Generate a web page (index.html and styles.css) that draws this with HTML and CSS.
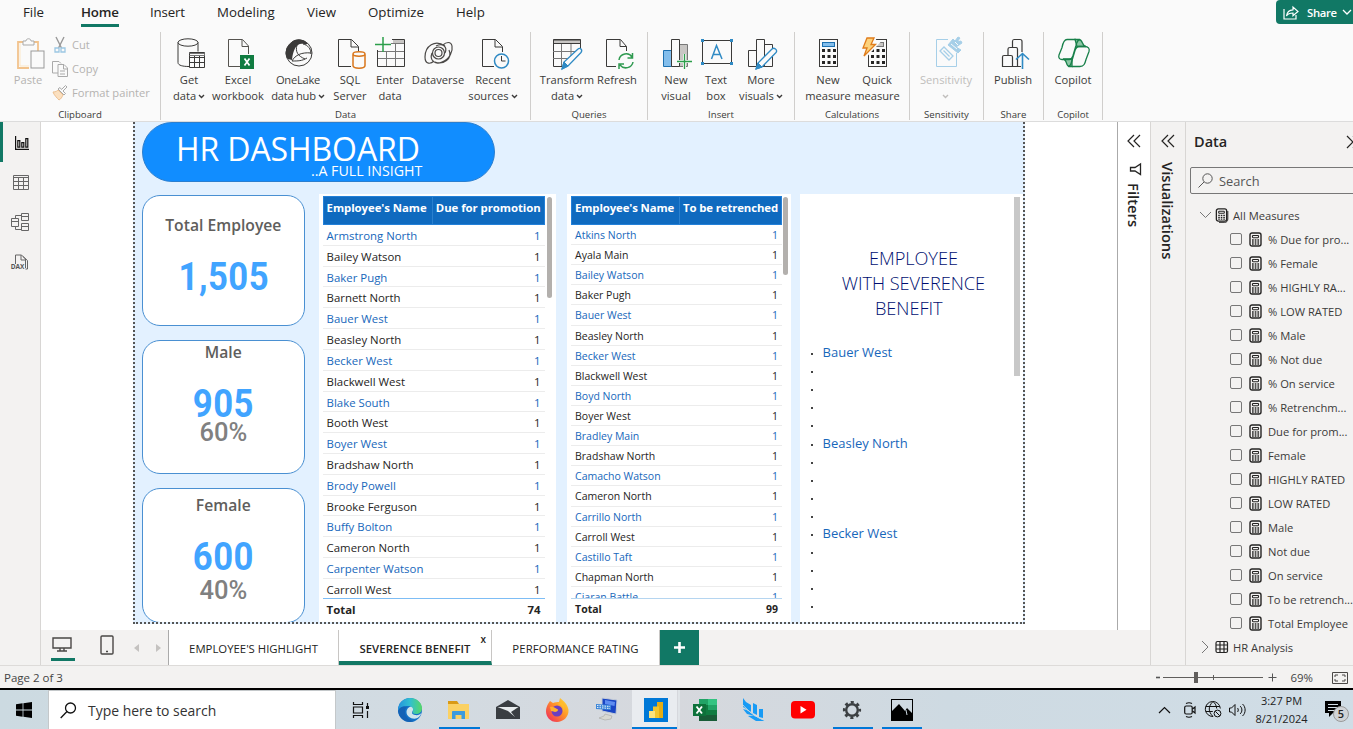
FILE: index.html
```html
<!DOCTYPE html>
<html lang="en">
<head>
<meta charset="utf-8">
<title>HR Dashboard</title>
<link rel="stylesheet" href="styles.css">
</head>
<body>
<svg class="defs" aria-hidden="true">
  <symbol id="calc" viewBox="0 0 13 15"><rect x="1" y="1" width="11" height="13" rx="2" fill="none" stroke="#252423" stroke-width="1.400"/><rect x="3.500" y="3.500" width="6" height="2.200" rx=".6" fill="none" stroke="#252423" stroke-width="1.100"/><path d="M3 8h1.700M5.700 8h1.700M8.400 8h1.700M3 10h1.700M5.700 10h1.700M8.400 10h1.700M3 12h1.700M5.700 12h1.700M8.400 12h1.700" stroke="#252423" stroke-width="1.300"/></symbol>
  <symbol id="chev" viewBox="0 0 7 5"><path d="M1 1l2.500 2.500L6 1" fill="none" stroke="currentColor" stroke-width="1.4"/></symbol>
  <symbol id="dbl" viewBox="0 0 14 14"><path d="M7 1L1 7l6 6M13 1L7 7l6 6" fill="none" stroke="#252423" stroke-width="1.2"/></symbol>
</svg>

<nav class="menu">
  <span class="m-file">File</span><span class="m-home">Home</span><span class="m-insert">Insert</span><span class="m-model">Modeling</span><span class="m-view">View</span><span class="m-opt">Optimize</span><span>Help</span>
  <button class="share"><svg width="16" height="15" viewBox="0 0 16 15" fill="none" stroke="#fff" stroke-width="1.2"><path d="M1 4v10h12v-4M3.500 11C4 7 6 5 10 4.800V2l5 4.500-5 4.300V8C7 8 5 8.500 3.500 11z"/></svg>Share<svg class="share-chev" width="10" height="7" viewBox="0 0 10 7"><path d="M1 1l4 4 4-4" fill="none" stroke="#fff" stroke-width="1.3"/></svg></button>
</nav>

<section class="ribbon">
  <div class="group g-clip">
    <div class="items">
      <div class="item paste"><svg viewBox="0 0 32 32"><path d="M10 5H5v26h11M21 5h4v9" fill="none" stroke="#f2c38d" stroke-width="1.800"/><path d="M7 6v23h9" fill="none" stroke="#fbe7c8"/><path d="M10 8V4h3c0-3 5-3 5 0h3v4z" fill="#fafafa" stroke="#aaa"/><rect x="18" y="14" width="13" height="17" fill="#fafafa" stroke="#999"/></svg><span>Paste</span></div>
      <div class="clip-list">
        <div><svg viewBox="0 0 16 16"><path d="M4 0l5.500 11M12 0L6.500 11" stroke="#999" fill="none" stroke-width="1.400"/><path d="M3 11h4v4H3zM9 11h4v4H9z" fill="none" stroke="#9cc7e3" stroke-width="1.300"/></svg>Cut</div>
        <div><svg viewBox="0 0 16 16"><path d="M6 12H.5V.5H7l2 2M6 3.500h6l3.500 3.500v8.500H6zM11.500 4v4h4M8 10h5M8 13h5" fill="none" stroke="#aaa"/></svg>Copy</div>
        <div><svg viewBox="0 0 16 16"><path d="M1 7c3 0 4-1 5-2l5 5c-1 2-2 4-4 5-2-2-5-5-6-8z" fill="#fbe0c0" stroke="#edc091"/><path d="M6 4l6 6 1.500-1.500L11 6l4-4-1.500-1.500-4 4L8 2.500z" fill="#fafafa" stroke="#aaa"/></svg>Format painter</div>
      </div>
    </div>
    <div class="glabel">Clipboard</div>
  </div>
  <div class="group g-data">
    <div class="items">
      <div class="item w40"><svg viewBox="0 0 32 32" fill="none" stroke="#3b3a39"><ellipse cx="14" cy="5.500" rx="10" ry="3.700"/><path d="M4 5.500v20c0 3 5 4 11 4M24 5.500v9"/><path d="M15.500 15.500h15v15h-15zM15.500 20.500h15M15.500 25.500h15M20.500 19v12M25.500 19v12"/><path d="M15.500 16.500h15v2h-15" stroke="#777"/></svg><span>Get<br>data<svg class="cv"><use href="#chev"/></svg></span></div>
      <div class="item w58"><svg viewBox="0 0 32 32" fill="none" stroke="#55534f"><path d="M17 29.500H5.500v-27h14l6 6.500v8M19 3v6.500h6"/><rect x="17" y="18" width="14" height="14" fill="#107c41" stroke="none"/><path d="M21.500 21.500l5 7M26.500 21.500l-5 7" stroke="#fff" stroke-width="1.700"/></svg><span>Excel<br>workbook</span></div>
      <div class="item w62"><svg viewBox="0 0 32 32"><circle cx="16" cy="16" r="13" fill="#fafafa" stroke="#3b3a39"/><path d="M8 6c3-5 12-5 16 0 1 1-1 2-3 1-7-2-11 5-12 16l-4-1C1 19 2 10 8 6z" fill="#3b3a39"/><path d="M14 8c-2 7 1 11 8 14M9 24c3-6 10-9 19-8M20 7c5 1 8 5 8 10M9 24c6 0 10 0 15-3" fill="none" stroke="#3b3a39"/></svg><span class="tight">OneLake<br>data hub<svg class="cv"><use href="#chev"/></svg></span></div>
      <div class="item w42"><svg viewBox="0 0 32 32" fill="none" stroke="#3b3a39"><path d="M16 29.500H3.500v-27h13l7 7V14M16 3v7h7"/><path d="M18 17.500v11c0 3.500 12 3.500 12 0v-11" stroke="#d9761b" stroke-width="1.500"/><ellipse cx="24" cy="17" rx="6" ry="2.200" stroke="#d9761b" stroke-width="1.500"/></svg><span>SQL<br>Server</span></div>
      <div class="item w38"><svg viewBox="0 0 32 32" fill="none" stroke="#3b3a39"><path d="M18 3h11v3H18z" fill="#c8c6c4" stroke="none"/><path d="M17 2.500h12.500v27h-27V13"/><path d="M16 6.500h13M3 14.500h26M3 21.500h26M11.500 15v14M20.500 7v22" stroke="#777"/><path d="M0 7.500h16M8 0v15" stroke="#2b9e4a" stroke-width="1.500"/></svg><span>Enter<br>data</span></div>
      <div class="item w58"><svg viewBox="0 0 32 32" fill="none" stroke="#4a4846" stroke-width="1.200"><circle cx="15.500" cy="16" r="6"/><circle cx="15.500" cy="16" r="3.500"/><path d="M22 9C12 2 2 9 2 20c0 8 6 7 9 4M9 16c-3 8 4 12 10 9 8-3 11-11 10-16-1-5-6-4-9-1M12 25c8 3 18-3 14-12M22 16c3-7-3-10-9-7"/></svg><span>Dataverse</span></div>
      <div class="item w52"><svg viewBox="0 0 32 32" fill="none" stroke="#3b3a39"><path d="M16 29.500H4.500v-27h13l7 7V15M17 3v7h7"/><circle cx="23.500" cy="24" r="7" stroke="#2f8ac4" stroke-width="1.500"/><path d="M23.500 19v5h4"/></svg><span>Recent<br>sources<svg class="cv"><use href="#chev"/></svg></span></div>
    </div>
    <div class="glabel">Data</div>
  </div>
  <div class="group g-query">
    <div class="items">
      <div class="item w54"><svg viewBox="0 0 32 32" fill="none" stroke="#3b3a39"><path d="M1.500 3h27v3.500h-27z" fill="#c8c6c4"/><path d="M12 29.500H1.500v-27h27V12"/><path d="M1 14.500h23M1 21.500h16M9.500 7v22M19 7v13" stroke="#777"/><path d="M10 32l2-7 14-13c2-2 5 1 3 3.500L16 29z" fill="#fafafa" stroke="#2f8ac4" stroke-width="1.300"/><path d="M10 32l2-7 4 4z" fill="#2f8ac4" stroke="#2f8ac4"/></svg><span>Transform<br>data<svg class="cv"><use href="#chev"/></svg></span></div>
      <div class="item w46"><svg viewBox="0 0 32 32" fill="none" stroke="#3b3a39"><path d="M14 29.500H4.500v-27h14l6 7V14M18 3v6.500h6.500"/><path d="M17 23c1-7 10-8 13-3M30.500 16v5h-5M31 25c-1 6-9 8-13 3M17 32v-5h5" stroke="#2f9a50" stroke-width="1.500"/></svg><span>Refresh</span></div>
    </div>
    <div class="glabel">Queries</div>
  </div>
  <div class="group g-insert">
    <div class="items">
      <div class="item w40"><svg viewBox="0 0 32 32" fill="none" stroke="#3b3a39"><path d="M2.500 13.500h8v16h-8z" fill="#83beec" stroke="#1d70b0"/><path d="M18 7.500h8.500v22H18z" fill="#c8c6c4" stroke="#777"/><path d="M10.500 2.500h8v27h-8z" fill="#fafafa"/><path d="M16 24.500h15M23.500 17v15" stroke="#fafafa" stroke-width="3"/><path d="M16 24.500h15M23.500 17v15" stroke="#2b9e4a" stroke-width="1.300"/></svg><span>New<br>visual</span></div>
      <div class="item w40"><svg viewBox="0 0 32 32" fill="none" stroke="#3b3a39"><path d="M1.500 3.500h29v23h-29z"/><path d="M10.500 22l5-13.500L21 22M12.300 17.500h7" stroke="#2f8ac4" stroke-width="1.500"/><path d="M0 2h3v3H0zM29 2h3v3h-3zM0 25h3v3H0zM29 25h3v3h-3z" fill="#2f8ac4" stroke="none"/></svg><span>Text<br>box</span></div>
      <div class="item w50"><svg viewBox="0 0 32 32" fill="none" stroke="#3b3a39"><path d="M2.500 13.500h8v16h-8zM18.500 7.500h8v22h-8zM10.500 2.500h8v27h-8z"/><path d="M10 32l2-6 14-14c2-2 6 1 4 3.500L16 30z" fill="#fafafa" stroke="#2f8ac4" stroke-width="1.300"/><path d="M10 32l2-6 4 4z" fill="#2f8ac4" stroke="#2f8ac4"/></svg><span>More<br>visuals<svg class="cv"><use href="#chev"/></svg></span></div>
    </div>
    <div class="glabel">Insert</div>
  </div>
  <div class="group g-calc">
    <div class="items">
      <div class="item w48"><svg viewBox="0 0 32 32"><rect x="6.500" y="2.500" width="18" height="27" fill="none" stroke="#3b3a39"/><rect x="9.500" y="5.500" width="12" height="4" fill="#83beec" stroke="#1d70b0"/><path d="M9 13.500h14M9 19.500h14M9 25.500h14" stroke="#252423" stroke-width="3" stroke-dasharray="3 2.500"/></svg><span>New<br>measure</span></div>
      <div class="item w50"><svg viewBox="0 0 32 32"><rect x="6.500" y="2.500" width="18" height="27" fill="none" stroke="#3b3a39"/><rect x="9.500" y="5.500" width="12" height="4" fill="#c8c6c4" stroke="#777"/><path d="M9 13.500h14M9 19.500h14M9 25.500h14" stroke="#252423" stroke-width="3" stroke-dasharray="3 2.500"/><path d="M5 0h8l-3 7h4L2 20l3-9H1z" fill="#fcd98c" stroke="#fafafa" stroke-width="4"/><path d="M5 1h7L9 7.500h4.500L2 19l3-8H1z" fill="#fcd27c" stroke="#e07c1b" stroke-width="1.300"/></svg><span>Quick<br>measure</span></div>
    </div>
    <div class="glabel">Calculations</div>
  </div>
  <div class="group g-sens">
    <div class="items">
      <div class="item w62 off"><svg viewBox="0 0 32 32" fill="none" stroke="#a6cfe8"><path d="M17 2.500H5.500v27h20V16"/><path d="M9 14l4-4 9 9-4 4zM12.500 13.500l6 6" stroke-width="1.300"/><path d="M17 8l5-6 2 2 3-4 2 1-3 4 4-1 1 2-6 4 5 3-3 3z" fill="#a6cfe8"/><path d="M20 7l6 5M24 5l3 3" stroke="#fafafa"/></svg><span>Sensitivity<br><svg class="cv solo"><use href="#chev"/></svg></span></div>
    </div>
    <div class="glabel">Sensitivity</div>
  </div>
  <div class="group g-share">
    <div class="items">
      <div class="item w50"><svg viewBox="0 0 32 32" fill="none" stroke="#3b3a39" stroke-width="1.200"><path d="M24 15V4.500c0-1-.5-2-2-2h-6c-1 0-1.500 1-1.500 2V10M19.500 18v-6c0-1-.5-1.500-1.500-1.500h-6c-1.500 0-2 .5-2 1.500v6M4.500 29.500V20c0-1.500.5-1.500 1.500-1.500h7c1.500 0 1.500.5 1.500 1.500v9.500zM14.500 29.500H23M19.500 18v11"/><path d="M24.500 32V16.500M18 22.500l6.500-6 6.500 6" stroke="#2f8ac4" stroke-width="1.600"/></svg><span>Publish</span></div>
    </div>
    <div class="glabel">Share</div>
  </div>
  <div class="group g-cop">
    <div class="items">
      <div class="item w50"><svg viewBox="0 0 32 32" stroke="#18804a" stroke-width="1.300" fill="none"><path d="M17 2.500h4c4 0 3 7 7 7h-9zM14 29.500h-3C8 29.500 9 22 5 22h9z" fill="#8cc7a6"/><path d="M18 2.500H9c-3 0-4 3-5 8L1 18c-1 3 1 4.500 3 4.500h7c2 0 3-1 4-4l3-10c1-4 2-6 4-6M14 29.500h8c4 0 5-3 6-7l3-8c1-3-1-5-4-5h-6c-2 0-3 1-4 4l-3 10c-1 4-2 6-4 6"/></svg><span>Copilot</span></div>
    </div>
    <div class="glabel">Copilot</div>
  </div>
</section>

<main class="work">
  <aside class="rail">
    <div class="rail-item on"><svg width="14" height="14" viewBox="0 0 14 14" fill="none" stroke="#111" stroke-width="1.200"><path d="M.6 0v13.400H14M2.800 4.600h2v6.600h-2zM6.800 6.600h2v4.600h-2zM10.800 2.600h2v8.600h-2z"/></svg></div>
    <div class="rail-item"><svg width="16" height="15" viewBox="0 0 16 15" fill="none" stroke="#666"><path d="M.5.5h15v14H.5zM.5 2.500h15M.5 6.500h15M.5 10.500h15M5.500 3v11M10.500 3v11"/></svg></div>
    <div class="rail-item"><svg width="19" height="19" viewBox="0 0 19 19" fill="none" stroke="#666"><path d="M.5 5.500h7v8h-7zM.5 8.500h7M10.500.5h7v7h-7zM10.500 3.500h7M10.500 10.500h7v7h-7zM10.500 13.500h7M4.500 5V2.500h6M4.500 14v2.500h6"/></svg></div>
    <div class="rail-item dax"><svg width="17" height="17" viewBox="0 0 17 17" fill="none" stroke="#666"><path d="M4.500 10V1h6l4 4v9M10 1v5h4M12 2.500l4.500 4V15h-2"/></svg><span>DAX</span></div>
  </aside>

  <div class="center">
    <div class="canvas">
      <div class="report">
        <header class="banner"><h1>HR DASHBOARD</h1><p>..A FULL INSIGHT</p></header>
        <div class="visuals">
          <div class="cards">
            <div class="card total"><h2>Total Employee</h2><b>1,505</b></div>
            <div class="card male"><h2>Male</h2><b>905</b><i>60%</i></div>
            <div class="card female"><h2>Female</h2><b>600</b><i>40%</i></div>
          </div>
          <div class="table t1">
            <div class="head"><span>Employee's Name</span><span>Due for promotion</span></div>
            <ul>
              <li>Armstrong North<em>1</em></li><li>Bailey Watson<em>1</em></li><li>Baker Pugh<em>1</em></li><li>Barnett North<em>1</em></li><li>Bauer West<em>1</em></li><li>Beasley North<em>1</em></li><li>Becker West<em>1</em></li><li>Blackwell West<em>1</em></li><li>Blake South<em>1</em></li><li>Booth West<em>1</em></li><li>Boyer West<em>1</em></li><li>Bradshaw North<em>1</em></li><li>Brody Powell<em>1</em></li><li>Brooke Ferguson<em>1</em></li><li>Buffy Bolton<em>1</em></li><li>Cameron North<em>1</em></li><li>Carpenter Watson<em>1</em></li><li>Carroll West<em>1</em></li>
            </ul>
            <div class="sum">Total<em>74</em></div>
            <div class="bar"></div>
          </div>
          <div class="table t2">
            <div class="head"><span>Employee's Name</span><span>To be retrenched</span></div>
            <ul>
              <li>Atkins North<em>1</em></li><li>Ayala Main<em>1</em></li><li>Bailey Watson<em>1</em></li><li>Baker Pugh<em>1</em></li><li>Bauer West<em>1</em></li><li>Beasley North<em>1</em></li><li>Becker West<em>1</em></li><li>Blackwell West<em>1</em></li><li>Boyd North<em>1</em></li><li>Boyer West<em>1</em></li><li>Bradley Main<em>1</em></li><li>Bradshaw North<em>1</em></li><li>Camacho Watson<em>1</em></li><li>Cameron North<em>1</em></li><li>Carrillo North<em>1</em></li><li>Carroll West<em>1</em></li><li>Castillo Taft<em>1</em></li><li>Chapman North<em>1</em></li><li>Ciaran Battle<em>1</em></li>
            </ul>
            <div class="sum">Total<em>99</em></div>
            <div class="bar"></div>
          </div>
          <div class="severance">
            <h2>&nbsp;&nbsp;EMPLOYEE<br>&nbsp;&nbsp;WITH SEVERENCE<br>BENEFIT</h2>
            <ul><li>Bauer West</li><li></li><li></li><li></li><li></li><li>Beasley North</li><li></li><li></li><li></li><li></li><li>Becker West</li><li></li><li></li><li></li><li></li></ul>
            <div class="bar"></div>
          </div>
        </div>
      </div>
      <aside class="filters"><svg width="14" height="14"><use href="#dbl"/></svg><svg class="funnel" width="13" height="13" viewBox="0 0 13 13"><path d="M11.500 1v10.500L6 8H1.500V4.500H6z" fill="none" stroke="#252423" stroke-width="1.300"/></svg><span>Filters</span></aside>
    </div>
    <div class="tabs">
      <div class="views">
        <span class="desk"><svg width="20" height="15" viewBox="0 0 20 15" fill="none" stroke="#4a4846" stroke-width="1.400"><path d="M1 1h18v10H1zM8 11v3M12 11v3M5 14h10"/></svg></span>
        <svg class="phone" width="14" height="20" viewBox="0 0 14 20" fill="none" stroke="#4a4846" stroke-width="1.400"><rect x="1" y="1" width="12" height="18" rx="1"/><path d="M6 16.500h2"/></svg>
        <svg class="arrows" width="28" height="8" viewBox="0 0 28 8" fill="#c4c2c0"><path d="M5 0v8L0 4zM22 0v8l5-4z"/></svg>
      </div>
      <div class="tab t-high">EMPLOYEE'S HIGHLIGHT</div>
      <div class="tab t-sev">SEVERENCE BENEFIT<span class="x">x</span></div>
      <div class="tab t-perf">PERFORMANCE RATING</div>
      <div class="plus"><svg width="11" height="11" viewBox="0 0 11 11"><path d="M5.500 0v11M0 5.500h11" stroke="#fff" stroke-width="2.600"/></svg></div>
    </div>
  </div>

  <aside class="vis"><svg width="14" height="14"><use href="#dbl"/></svg><span>Visualizations</span></aside>

  <aside class="data">
    <div class="data-head">Data<svg width="14" height="14" viewBox="0 0 14 14"><path d="M1 1l6 6-6 6M7 1l6 6-6 6" fill="none" stroke="#252423" stroke-width="1.200"/></svg></div>
    <div class="find"><svg width="15" height="15" viewBox="0 0 15 15" fill="none" stroke="#555"><circle cx="9.500" cy="5.500" r="4.700"/><path d="M6 9l-5.500 5.500"/></svg>Search</div>
    <div class="node"><svg width="13" height="8" viewBox="0 0 13 8"><path d="M1 1l5.500 5.500L12 1" fill="none" stroke="#777"/></svg><svg class="ico" width="14" height="15" viewBox="0 0 14 15"><use href="#calc" width="13" height="14"/><path d="M12.800 3v8c0 2-1 3.300-3 3.300H4" fill="none" stroke="#252423"/></svg>All Measures</div>
    <div class="leaf"><i></i><svg><use href="#calc"/></svg>% Due for pro...</div>
    <div class="leaf"><i></i><svg><use href="#calc"/></svg>% Female</div>
    <div class="leaf"><i></i><svg><use href="#calc"/></svg>% HIGHLY RA...</div>
    <div class="leaf"><i></i><svg><use href="#calc"/></svg>% LOW RATED</div>
    <div class="leaf"><i></i><svg><use href="#calc"/></svg>% Male</div>
    <div class="leaf"><i></i><svg><use href="#calc"/></svg>% Not due</div>
    <div class="leaf"><i></i><svg><use href="#calc"/></svg>% On service</div>
    <div class="leaf"><i></i><svg><use href="#calc"/></svg>% Retrenchm...</div>
    <div class="leaf"><i></i><svg><use href="#calc"/></svg>Due for prom...</div>
    <div class="leaf"><i></i><svg><use href="#calc"/></svg>Female</div>
    <div class="leaf"><i></i><svg><use href="#calc"/></svg>HIGHLY RATED</div>
    <div class="leaf"><i></i><svg><use href="#calc"/></svg>LOW RATED</div>
    <div class="leaf"><i></i><svg><use href="#calc"/></svg>Male</div>
    <div class="leaf"><i></i><svg><use href="#calc"/></svg>Not due</div>
    <div class="leaf"><i></i><svg><use href="#calc"/></svg>On service</div>
    <div class="leaf"><i></i><svg><use href="#calc"/></svg>To be retrench...</div>
    <div class="leaf"><i></i><svg><use href="#calc"/></svg>Total Employee</div>
    <div class="node"><svg width="13" height="12" viewBox="0 0 13 12"><path d="M3 0l6 6-6 6" fill="none" stroke="#777"/></svg><svg class="ico" width="14" height="14" viewBox="0 0 14 14" fill="none" stroke="#252423" stroke-width="1.200"><rect x="1" y="1.500" width="11.500" height="11" rx="1.500"/><path d="M1 5h12M1 9h12M5 1.500v11M9 1.500v11"/></svg>HR Analysis</div>
  </aside>
</main>

<footer class="status"><span class="page">Page 2 of 3</span>
  <div class="zoom"><svg width="124" height="13" viewBox="0 0 124 13"><path d="M1 6.500h4" stroke="#555" stroke-width="1.600"/><path d="M8 6.500h100" stroke="#605e5c"/><path d="M58.500 4v5" stroke="#605e5c"/><path d="M39 1h4v11h-4z" fill="#605e5c"/><path d="M113.500 6.500h8M117.500 2.500v8" stroke="#555"/></svg><span>69%</span><svg width="16" height="12" viewBox="0 0 16 12" fill="none" stroke="#4a4846"><path d="M.5.5h15v11H.5z"/><path d="M3 5V3h3M10 3h3v2M13 7v2h-3M6 9H3V7"/></svg></div>
</footer>

<div class="taskbar">
  <div class="start"><svg width="16" height="16" viewBox="0 0 16 16"><path d="M0 2.300L6.600 1.300v6.300H0zM7.400 1.200L16 0v7.600H7.400zM0 8.400h6.600v6.300L0 13.700zM7.400 8.400H16V16l-8.600-1.200z"/></svg></div>
  <div class="search"><svg width="17" height="17" viewBox="0 0 17 17" fill="none" stroke="#111" stroke-width="1.300"><circle cx="10.500" cy="6" r="5"/><path d="M7 9.500L.7 16"/></svg>Type here to search</div>
  <div class="apps">
    <span><svg width="18" height="16" viewBox="0 0 18 16" fill="none" stroke="#111" stroke-width="1.200"><path d="M1.500 0v2.500h9V0M1.500 5h9v6h-9zM1.500 16v-2.500h9V16M15.500 1v3M15.500 9v7"/><path d="M14 4h3v3h-3z" fill="#111" stroke="none"/></svg></span>
    <span><svg width="24" height="24" viewBox="0 0 24 24"><defs><linearGradient id="eg" x1="0" y1="0" x2="1" y2="0"><stop offset="0" stop-color="#2493dd"/><stop offset=".5" stop-color="#31bfd0"/><stop offset="1" stop-color="#56d866"/></linearGradient></defs><circle cx="12" cy="12" r="12" fill="#1372c8"/><path d="M0 11C1 4 6 0 12 0c7 0 12 5 12 10 0 4-3 6-6 6-3 0-4-1-3-3 1-3-2-5-5-5-4 0-9 1-10 6z" fill="url(#eg)"/><path d="M15 12c0 1-3 4 2 5 3 .5 5-.5 6.500-2-1 2-2 4-4 5-5 2-11-1-11-6 0-3 3-6 5-5 1 .5 2 2 1.500 3z" fill="#cfe4ec"/><path d="M7 12c-1 5 3 10 9 11.200C9 26 1 21 0 13c2-5 6-5 9-4-1 .8-1.700 2-2 3z" fill="#1462b5"/></svg></span>
    <span class="run"><svg width="22" height="20" viewBox="0 0 22 20"><path d="M0 1h9l2 3H0z" fill="#d99a16"/><path d="M0 4h21v15H0z" fill="#fbd163"/><path d="M4 19v-7c0-1 .5-1 1-1h11c1 0 1 .5 1 1v7h-3.500v-4h-6v4z" fill="#3c9bde"/></svg></span>
    <span><svg width="24" height="20" viewBox="0 0 24 20"><path d="M0 7L12 0l12 7v12H0z" fill="#3a3e42"/><path d="M1.500 7h21L15 12l4 5-7-6z" fill="#e8ecee"/></svg></span>
    <span><svg width="24" height="24" viewBox="0 0 24 24"><defs><linearGradient id="ff" x1="1" y1="0" x2="0" y2="1"><stop offset="0" stop-color="#ffe33c"/><stop offset=".45" stop-color="#ff9328"/><stop offset="1" stop-color="#ee1d62"/></linearGradient></defs><path d="M3 6l2-3 3 2c2-1 4-1 6-1L15 0c4 3 8 7 8.500 12C24 19 18 24 12 24 5 24 1 19 1 13c0-3 1-5 2-7z" fill="url(#ff)"/><circle cx="12" cy="13" r="5.500" fill="#6a3fc0"/><path d="M5 9c3-1 5 1 7 2 2 0 1 3-2 3-1 0-2-1-4-1z" fill="#ffb02e"/><path d="M12 6c5 0 8 4 6 9 3-5 1-9-2-12 0 2-2 3-4 3z" fill="#ffbc2c"/></svg></span>
    <span><svg width="22" height="23" viewBox="0 0 22 23"><path d="M6 0l15 2-1 14L6 13z" fill="#1945c4" stroke="#c4ccd8"/><path d="M9 2l10 2-.5 4L9 6z" fill="#5e8cf0"/><path d="M9 16l7 2-1 3-6 1-6-2 5-2z" fill="#d8d8d2" stroke="#9c9c96" stroke-width=".5"/><path d="M0 6l15 1v5L0 11z" fill="#3c86d8"/><path d="M1 7.500l13 1M1 9.500l13 1" stroke="#fff" stroke-width=".9" stroke-dasharray="1.500 1"/></svg></span>
    <span class="run active"><svg width="24" height="24" viewBox="0 0 24 24"><path d="M0 0h24v24H0z" fill="#0078d7"/><path d="M13 4h6v16h-6z" fill="#e5ad12"/><path d="M9 8.500h6V20H9z" fill="#f1c52d"/><path d="M5 13h6v7H5z" fill="#fae27c"/></svg></span>
    <span><svg width="24" height="22" viewBox="0 0 24 22"><path d="M6 0h9v6H6z" fill="#21a366"/><path d="M15 0h9v6h-9z" fill="#33c481"/><path d="M6 6h9v10H6z" fill="#107c41"/><path d="M15 6h9v5h-9z" fill="#21a366"/><path d="M15 11h9v5h-9z" fill="#107c41"/><path d="M6 16h18v6H6z" fill="#185c37"/><path d="M0 5h13v12H0z" fill="#0d713a"/><path d="M3.500 7.500l5.500 7M9 7.500l-5.500 7" stroke="#fff" stroke-width="1.900"/></svg></span>
    <span><svg width="24" height="24" viewBox="0 0 24 24" fill="#189bf5"><path d="M1 0l3 4 5 3v7L1 9zM11 5l4 2v10l-4-2zM17 11h4v9l-4-1zM1 11c5 1 9 4 12 7L5 16zM6 18c5-1 8 0 17 5H14z"/><path d="M0 6c6 7 13 13 24 17" stroke="#d0dbe1" fill="none"/></svg></span>
    <span><svg width="24" height="18" viewBox="0 0 24 18"><rect width="24" height="17.500" rx="4" fill="#f00"/><path d="M9.500 5v7.500l6-3.700z" fill="#fff"/></svg></span>
    <span class="run"><svg width="20" height="20" viewBox="0 0 20 20" fill="none" stroke="#3c4043"><circle cx="10" cy="10" r="5.800" stroke-width="2.400"/><circle cx="10" cy="10" r="7.800" stroke-width="2.600" stroke-dasharray="3.060 3.066" stroke-dashoffset="1.500"/></svg></span>
    <span class="run"><svg width="22" height="22" viewBox="0 0 22 22"><rect x=".5" y=".5" width="21" height="21" fill="none" stroke="#000"/><path d="M0 22v-9l8-8 6 7 2-3 6 6v7z"/><path d="M15 11l1 5" stroke="#ccd8df"/></svg></span>
  </div>
  <div class="tray">
    <svg width="13" height="8" viewBox="0 0 13 8"><path d="M1 7l5.500-5.500L12 7" fill="none" stroke="#111" stroke-width="1.200"/></svg>
    <svg class="cam" width="12" height="16" viewBox="0 0 12 16" fill="none" stroke="#111" stroke-width="1.200"><rect x=".7" y="4" width="7.500" height="8" rx="1.500"/><path d="M8.500 7l2.500-2v6L8.500 9M2 1.500c2-1 4-1 6 0M2 14.500c2 1 4 1 6 0"/></svg>
    <svg class="net" width="17" height="17" viewBox="0 0 17 17" fill="none" stroke="#111"><path d="M8 15.500a7.500 7.500 0 1 1 7.300-8M8 15.500c-5-5-5-10 0-15 2.500 2 3.500 4.500 3.700 7M.8 5.500h14M.8 10.500h7"/><circle cx="12.500" cy="12.500" r="3.400"/><path d="M10.300 10.300l4.500 4.500"/></svg>
    <svg class="snd" width="17" height="14" viewBox="0 0 17 14" fill="none" stroke="#111"><path d="M.5 5h2L6 1.500v11L2.500 9h-2zM8.500 5c1 1 1 3 0 4M11 3c2.500 2 2.500 6 0 8M13.500 1c3.500 3 3.500 9 0 12"/></svg>
    <div class="clock">3:27 PM<br>8/21/2024</div>
    <div class="note"><svg width="16" height="16" viewBox="0 0 16 16"><path d="M0 0h16v12H8l-4 4v-4H0z"/><path d="M3 3.500h10M3 6.500h10M3 9.500h7" stroke="#d3dee6"/></svg><span>5</span></div>
  </div>
</div>
</body>
</html>
```
FILE: styles.css
```css
* { box-sizing: border-box; }
body { margin: 0; width: 1353px; height: 729px; overflow: hidden; display: flex; flex-direction: column; font-family: "Open Sans", "Noto Sans", sans-serif; font-size: 11px; color: #252423; background: #fafafa; }
svg { display: block; flex: none; overflow: visible; }
ul { margin: 0; padding: 0; list-style: none; }
h1, h2, p { margin: 0; font-weight: 400; }
em, i { font-style: normal; }
.defs { position: absolute; width: 0; height: 0; }

.menu { flex: none; height: 32px; display: flex; align-items: flex-start; padding-left: 23px; font-size: 13.3px; line-height: 25px; white-space: nowrap; }
.menu > span { height: 27px; }
.m-file { width: 58px; }
.menu .m-home { width: 38px; margin-right: 31px; font-weight: 600; letter-spacing: -.2px; border-bottom: 3px solid #117865; }
.m-insert { width: 67px; letter-spacing: -.15px; }
.m-model { width: 90px; }
.m-view { width: 61px; }
.m-opt { width: 88px; }
.share { margin-left: auto; flex: none; width: 77px; height: 24px; border: 0; border-radius: 4px 0 0 4px; background: #117865; color: #fff; display: flex; align-items: center; padding: 0 0 0 7px; font: 600 11.3px "Open Sans", sans-serif; letter-spacing: -.3px; gap: 8px; }
.share-chev { margin-left: -3px; }

.ribbon { flex: none; height: 90px; display: flex; border-bottom: 1px solid #dcdcdc; }
.group { height: 88px; border-right: 1px solid #d0cecc; padding-top: 5px; display: flex; flex-direction: column; }
.items { display: flex; height: 73px; font-size: 11.15px; }
.glabel { font-size: 9.6px; line-height: 11px; text-align: center; color: #3b3a39; }
.item { display: flex; flex-direction: column; align-items: center; text-align: center; line-height: 16px; color: #3b3a39; white-space: nowrap; }
.item > svg { width: 32px; height: 32px; margin: 0 0 3px 1px; }
.tight { letter-spacing: -.25px; }
.cv { width: 7px; height: 5px; display: inline-block; margin-left: 2px; vertical-align: 1px; }
.solo { margin: 0; }
.w38 { width: 38px; } .w40 { width: 40px; } .w42 { width: 42px; } .w46 { width: 46px; } .w48 { width: 48px; }
.w50 { width: 50px; } .w52 { width: 52px; } .w54 { width: 54px; } .w58 { width: 58px; } .w62 { width: 62px; }
.g-clip { width: 161px; }
.g-clip .items { color: #b5b3b1; padding-left: 10px; }
.item.paste { width: 36px; color: #b5b3b1; }
.clip-list { padding-left: 6px; }
.clip-list div { display: flex; align-items: center; gap: 4px; height: 24px; margin-top: -4px; margin-bottom: 4px; line-height: 24px; }
.clip-list svg { width: 16px; height: 16px; }
.g-data { width: 370px; } .g-data .items { padding-left: 8px; }
.g-query { width: 117px; } .g-query .items { padding-left: 9px; }
.g-insert { width: 147px; } .g-insert .items { padding-left: 8px; }
.g-calc { width: 115px; } .g-calc .items { padding-left: 9px; }
.g-sens { width: 74px; } .g-sens .items { padding-left: 5px; }
.g-share { width: 60px; } .g-share .items { padding-left: 4px; }
.g-cop { width: 59px; } .g-cop .items { padding-left: 4px; }
.item.off { color: #c0bebc; }

.work { flex: none; height: 543px; display: flex; background: #f3f2f1; }
.rail { width: 41px; border-right: 1px solid #d8d6d4; display: flex; flex-direction: column; }
.rail-item { height: 40px; display: flex; align-items: center; justify-content: center; border-left: 3px solid transparent; padding-right: 2px; }
.rail-item.on { border-color: #117865; padding: 1px 0 0; }
.rail-item.dax { flex-direction: column; padding-right: 4px; }
.dax span { font-size: 6.5px; font-weight: 700; line-height: 6px; margin-top: -7px; margin-left: -4px; background: #f3f2f1; color: #555; }
.center { width: 1109px; display: flex; flex-direction: column; }
.canvas { height: 508px; background: #fff; display: flex; justify-content: space-between; padding-left: 92px; }
.report { width: 892px; height: 502px; border: 2px dotted #555; border-top: 0; background: #e3f1ff; padding-left: 7px; overflow: hidden; }
.banner { width: 353px; height: 60px; border-radius: 30px; background: #118dff; border: 1px solid #2b7fd0; color: #fff; padding-top: 10px; }
.banner h1 { font-size: 32px; line-height: 32px; padding-left: 33px; letter-spacing: -.1px; }
.banner p { padding-left: 168px; font-size: 14.2px; line-height: 12px; white-space: nowrap; }
.visuals { display: flex; margin-top: 12px; align-items: flex-start; }
.cards { width: 163px; margin-right: 14px; padding-top: 1px; }
.card { border: 1px solid #4a90d2; border-radius: 18px; background: #fff; display: flex; flex-direction: column; align-items: center; }
.card h2 { font-size: 15.7px; line-height: 20px; font-weight: 600; color: #605e5c; }
.card b { font: 700 39px/32px Roboto, sans-serif; letter-spacing: .5px; color: #41a4ff; transform: scaleX(.89); }
.card i { font: 500 25.5px/24px Roboto, sans-serif; color: #808080; }
.total { height: 131px; padding-top: 19px; margin-bottom: 14px; }
.total b { margin-top: 26px; }
.male { height: 134px; margin-bottom: 14px; padding-top: 1px; }
.male b { margin-top: 26px; }
.female { height: 135px; padding-top: 6px; }
.female b { margin-top: 26px; }
.female i { margin-top: 5px; }
.table { height: 430px; background: #fff; position: relative; padding-top: 2px; }
.t1 { width: 238px; margin-right: 11px; padding-left: 4px; }
.t2 { width: 224px; margin-right: 8px; padding-left: 4px; font-size: 10.5px; }
.t1 { font-size: 11.4px; }
.head { height: 29px; background: #0f6abf; border: 1px solid #2380d8; color: #fff; font-weight: 700; font-size: 11.4px; letter-spacing: -.06px; line-height: 22px; display: flex; justify-content: space-between; white-space: nowrap; }
.head span { padding: 0 3px; }
.head span + span { border-left: 1px solid #2a80ce; }
.t2 .head { letter-spacing: -.12px; }
.t1 .head, .t1 ul, .t1 .sum { width: 222px; }
.t2 .head, .t2 ul, .t2 .sum { width: 211px; }
.table ul { height: 374px; overflow: hidden; border-bottom: 1px solid #7dbdf5; }
.t2 ul { border-color: #b5d5f0; }
.table li { display: flex; justify-content: space-between; padding: 0 4px; border-bottom: 1px solid #ececec; }
.table li:nth-child(odd) { color: #1767bb; }
.t1 li { height: 20.82px; line-height: 21px; }
.t2 li { height: 20.12px; line-height: 21px; }
.sum { display: flex; justify-content: space-between; padding: 0 4px; font-weight: 700; line-height: 21px; }
.t2 .sum { line-height: 20px; }
.bar { position: absolute; background: #b3b0ad; border-radius: 3px; right: 4px; top: 3px; width: 5px; height: 101px; }
.t2 .bar { height: 78px; right: 3px; }
.severance { width: 224px; height: 428px; background: #fff; position: relative; padding-top: 52px; margin-left: 1px; }
.severance h2 { font-size: 18.2px; letter-spacing: -.05px; line-height: 25px; font-weight: 300; text-align: center; color: #000f70; padding-right: 5px; }
.severance ul { padding: 22px 0 0 11px; font-size: 13px; color: #1767bb; }
.severance li { height: 18.1px; line-height: 18px; display: flex; align-items: center; }
.severance li::before { content: ""; width: 2px; height: 2px; background: #444; margin-right: 10px; margin-top: 4px; }
.severance .bar { width: 6px; height: 179px; border-radius: 0; right: 3px; background: #c8c8c8; }
.filters { width: 33px; border-left: 1px solid #aaa; display: flex; flex-direction: column; align-items: center; padding-top: 12px; font-weight: 600; font-size: 14.8px; }
.funnel { margin: 15px 0 7px 3px; }
.filters span, .vis span { writing-mode: vertical-rl; line-height: 18px; }
.tabs { height: 35px; display: flex; font-size: 11.35px; }
.views { width: 128px; border-right: 1px solid #aaa; display: flex; align-items: flex-start; }
.desk { width: 24px; height: 31px; margin-left: 10px; padding: 7px 0 0 1px; border-bottom: 3px solid #117865; }
.phone { margin: 5px 0 0 25px; }
.arrows { margin: 14px 0 0 20px; }
.tab { background: #fff; border-right: 1px solid #c8c6c4; display: flex; align-items: center; justify-content: center; white-space: nowrap; padding-top: 2px; }
.t-high { width: 170px; }
.t-sev { width: 153px; font-weight: 600; letter-spacing: .08px; border-bottom: 4px solid #117865; padding-top: 6px; position: relative; }
.x { position: absolute; right: 5px; top: 2px; font-size: 10px; }
.t-perf { width: 168px; letter-spacing: .1px; }
.plus { width: 39px; background: #117865; display: flex; align-items: center; justify-content: center; }
.vis { width: 36px; border-left: 1px solid #d8d6d4; border-right: 1px solid #d8d6d4; display: flex; flex-direction: column; align-items: center; padding-top: 12px; font-weight: 600; font-size: 14.7px; }
.vis span { margin-top: 14px; }
.data { flex: 1; min-width: 0; overflow: hidden; padding-left: 4px; font-size: 11.2px; color: #3b3a39; white-space: nowrap; }
.data-head { height: 39px; padding-left: 4px; width: 170px; display: flex; align-items: center; justify-content: space-between; font-size: 14.5px; font-weight: 600; color: #252423; }
.find { width: 180px; height: 27px; margin: 6px 0 9px; border: 1px solid #777; border-radius: 2px; display: flex; align-items: center; gap: 6px; padding-left: 7px; font-size: 12.8px; color: #555; }
.node { height: 24px; padding-left: 9px; display: flex; align-items: center; }
.ico { margin: 0 4px 0 3px; }
.leaf { height: 24px; padding-left: 40px; display: flex; align-items: center; }
.leaf i { width: 12px; height: 12px; border: 1px solid #777; border-radius: 2px; margin-right: 7px; }
.leaf svg { width: 13px; height: 15px; margin-right: 6px; }

.status { flex: none; height: 25px; background: #f3f2f1; border-top: 1px solid #dddbd9; border-bottom: 2px solid #000; display: flex; align-items: center; justify-content: space-between; padding: 1px 5px 0 4px; color: #444; }
.page { font-size: 11.5px; }
.zoom { display: flex; align-items: center; }
.zoom span { margin: 0 19px 0 12px; font-size: 11.4px; }

.taskbar { flex: none; height: 39px; display: flex; background: linear-gradient(90deg, #ccdae1, #d2dbe2 30%, #d6d8dd 50%, #cedae2 70%, #d0dde6); }
.start { width: 48px; display: flex; align-items: center; justify-content: center; }
.search { width: 288px; background: #fff; border: 1px solid #c4c8ca; border-bottom: 0; display: flex; align-items: center; gap: 11px; padding: 1px 0 0 11px; font-size: 13.95px; color: #333; }
.apps { display: flex; }
.apps span { width: 49.2px; display: flex; align-items: center; justify-content: center; position: relative; }
.run::after { content: ""; position: absolute; bottom: 0; left: 5px; right: 4px; height: 2px; background: #0078d7; }
.apps .active { background: linear-gradient(90deg, transparent 1px, #e9ecf0 1px 46px, transparent 46px 47px, #e0e4e8 47px); }
.apps .active::after { left: 1px; right: 3px; }
.tray { margin-left: auto; display: flex; align-items: center; padding-right: 4px; }
.cam { margin-left: 13px; } .net { margin-left: 9px; } .snd { margin-left: 7px; }
.clock { width: 53px; margin-left: 9px; text-align: center; line-height: 17.5px; color: #222; }
.note { width: 24px; height: 25px; margin-left: 17px; padding-top: 4px; position: relative; }
.note span { position: absolute; left: 8px; top: 9px; width: 16px; height: 16px; border-radius: 8px; border: 1px solid #999; background: #d0d3d6; text-align: center; line-height: 14px; font-size: 11px; font-weight: 600; }
```
